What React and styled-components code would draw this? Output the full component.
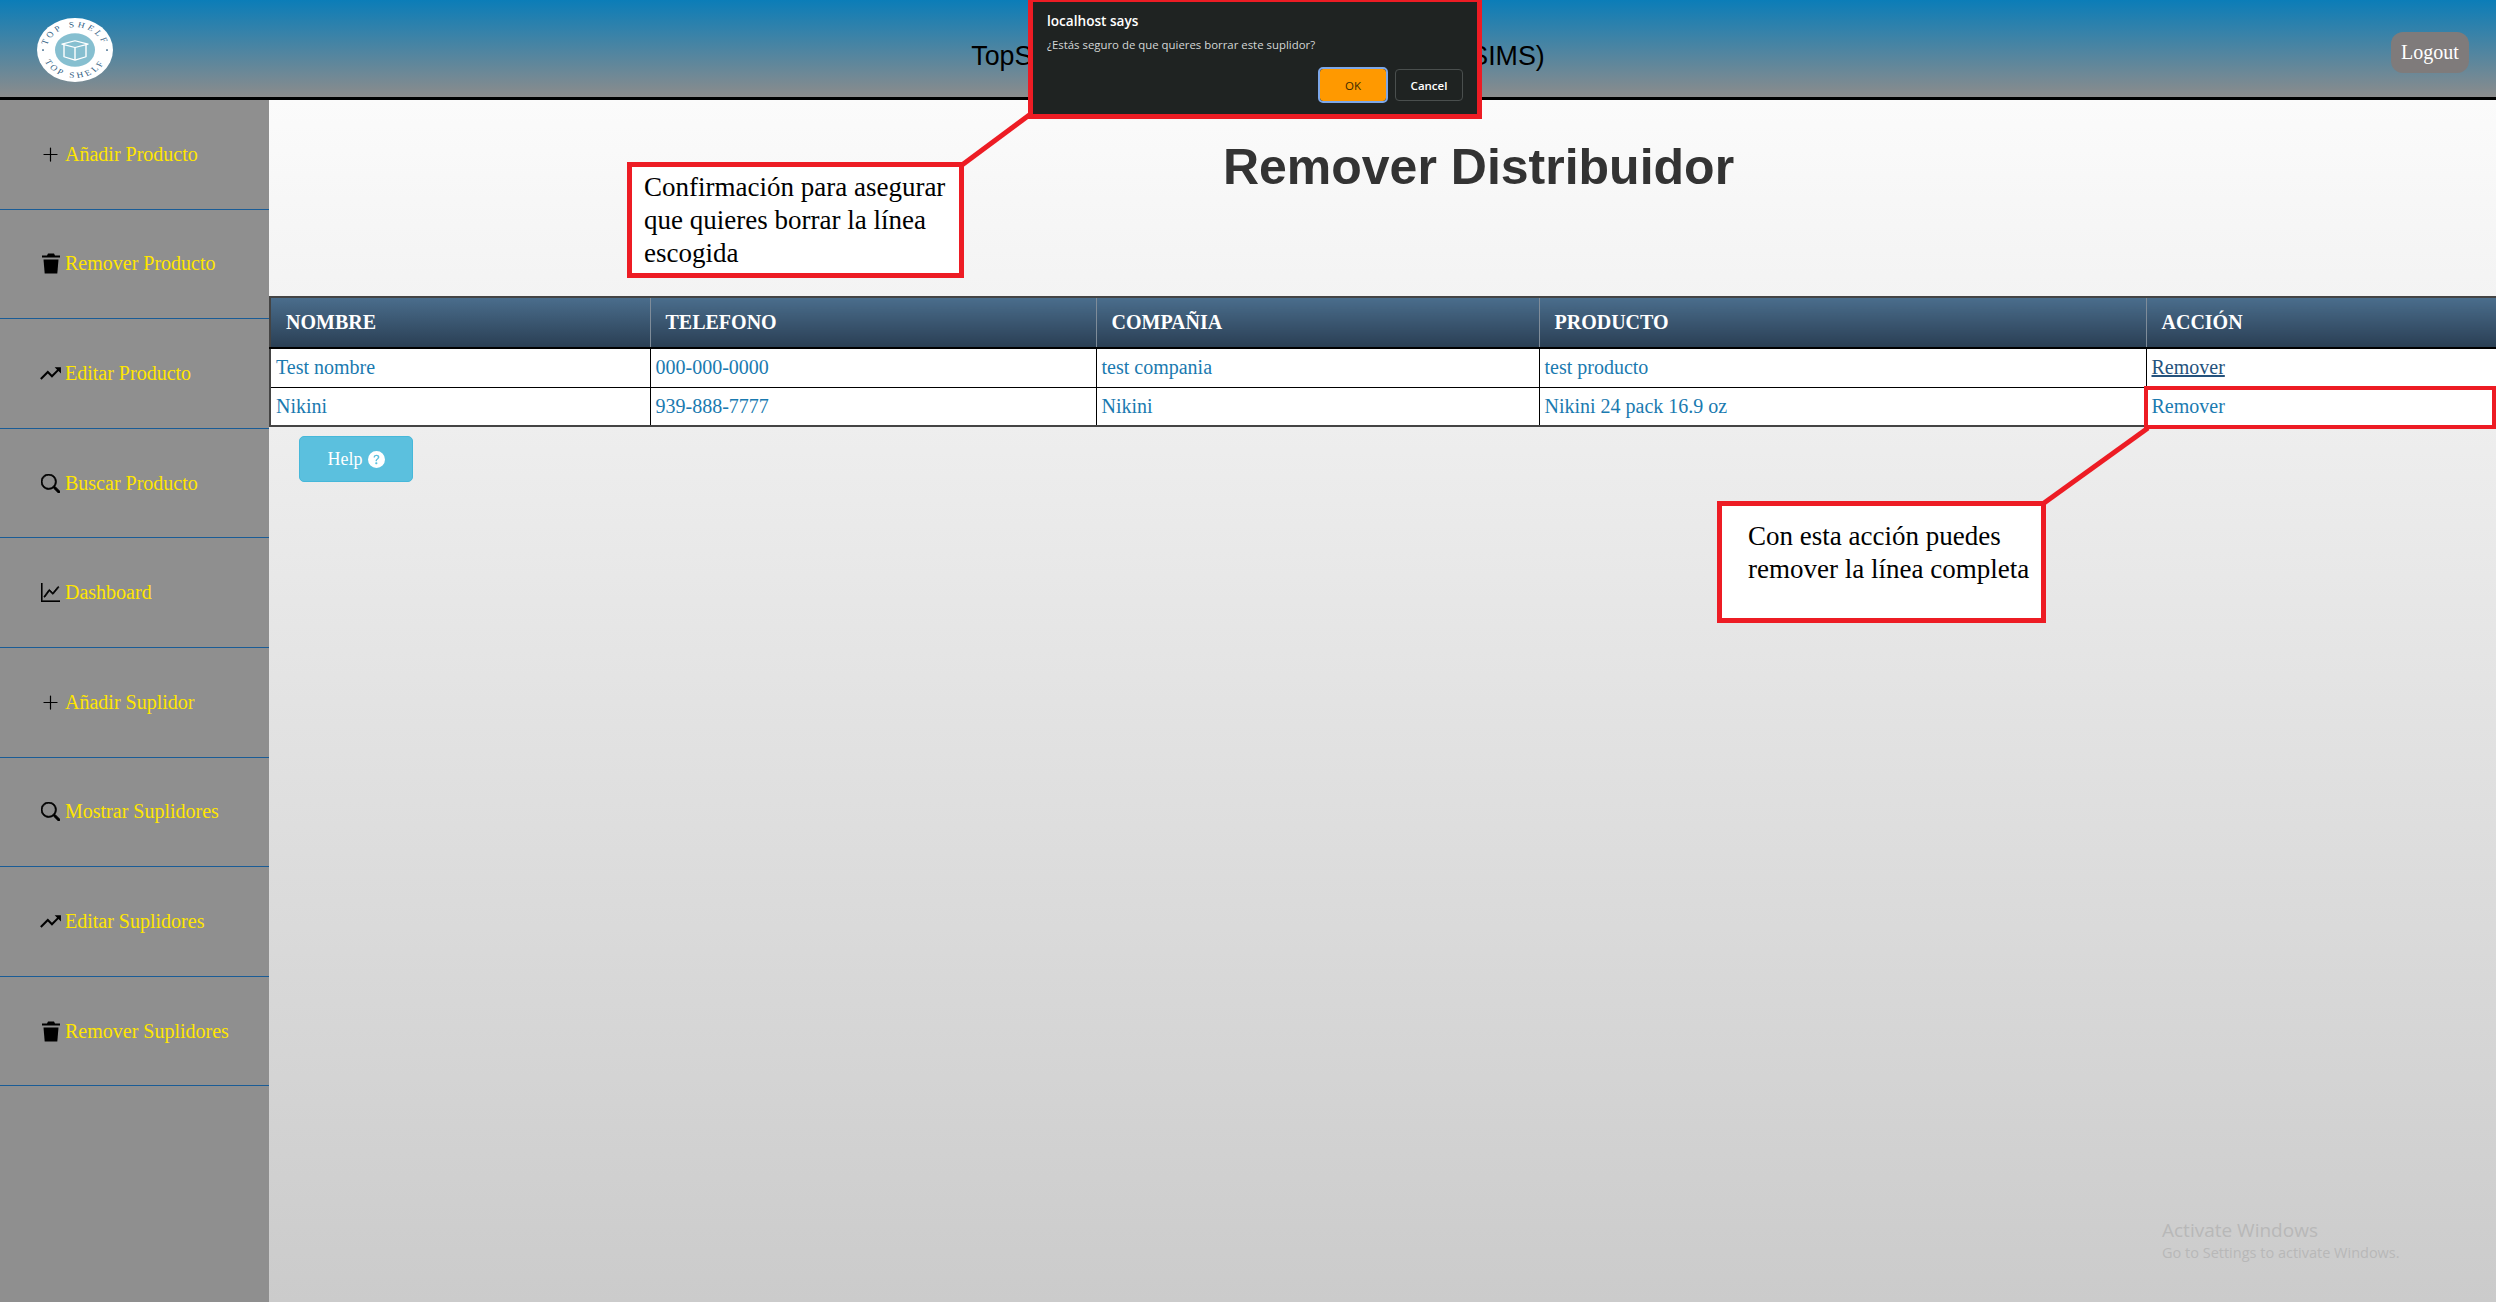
import React from 'react'
import styled, { createGlobalStyle } from 'styled-components'
import { BsPlusLg, BsSearch, BsGraphUp, BsQuestionCircleFill } from 'react-icons/bs'
import { MdTrendingUp } from 'react-icons/md'

const GlobalStyle = createGlobalStyle`
  html, body { margin: 0; padding: 0; height: 100%; }
  body { font-family: "Liberation Serif", "Times New Roman", serif; overflow: hidden; }
  #root { height: 100%; }
`

function TrashIcon() {
  return (
    <svg width="20" height="21" viewBox="0 0 20 21" fill="currentColor">
      <path d="M7 0.5 H13 L14 2.5 H19 V4.5 H1 V2.5 H6 Z" />
      <path d="M2.5 6.5 H17.5 L16.3 20.5 H3.7 Z" />
    </svg>
  )
}

const menuItems = [
  { label: 'Añadir Producto', icon: <BsPlusLg size={19} /> },
  { label: 'Remover Producto', icon: <TrashIcon /> },
  { label: 'Editar Producto', icon: <MdTrendingUp size={25} /> },
  { label: 'Buscar Producto', icon: <BsSearch size={19} stroke="currentColor" strokeWidth={0.6} /> },
  { label: 'Dashboard', icon: <BsGraphUp size={19} stroke="currentColor" strokeWidth={0.6} /> },
  { label: 'Añadir Suplidor', icon: <BsPlusLg size={19} /> },
  { label: 'Mostrar Suplidores', icon: <BsSearch size={19} stroke="currentColor" strokeWidth={0.6} /> },
  { label: 'Editar Suplidores', icon: <MdTrendingUp size={25} /> },
  { label: 'Remover Suplidores', icon: <TrashIcon /> },
]

const columns = [
  { title: 'Nombre', width: 380 },
  { title: 'Telefono', width: 446 },
  { title: 'Compañia', width: 443 },
  { title: 'Producto', width: 607 },
  { title: 'Acción', width: 351 },
]

const rows = [
  ['Test nombre', '000-000-0000', 'test compania', 'test producto'],
  ['Nikini', '939-888-7777', 'Nikini', 'Nikini 24 pack 16.9 oz'],
]

function Logo() {
  return (
    <LogoSvg viewBox="0 0 76 76" preserveAspectRatio="none">
      <defs>
        <path id="arcTop" d="M 9 40 A 29 29 0 0 1 67 40" />
        <path id="arcBottom" d="M 5 38 A 33 33 0 0 0 71 38" />
      </defs>
      <circle cx="38" cy="38" r="38" fill="#fff" />
      <circle cx="38" cy="38" r="20" fill="#86bfd0" />
      <text fontFamily="Liberation Serif, serif" fontSize="9.5" letterSpacing="3" fill="#2f5d82">
        <textPath href="#arcTop" startOffset="50%" textAnchor="middle">TOP SHELF</textPath>
      </text>
      <text fontFamily="Liberation Serif, serif" fontSize="9.5" letterSpacing="3" fill="#2f5d82">
        <textPath href="#arcBottom" startOffset="50%" textAnchor="middle">TOP SHELF</textPath>
      </text>
      <circle cx="6" cy="38" r="1" fill="#2f5d82" />
      <circle cx="70" cy="38" r="1" fill="#2f5d82" />
      <g fill="none" stroke="#fff" strokeWidth="1.4" strokeLinejoin="round">
        <path d="M25 31 L38 27 L51 31 L38 35 Z" />
        <path d="M27 32 V46 L38 50 L49 46 V32" />
        <path d="M38 35 V50" />
      </g>
    </LogoSvg>
  )
}

export default function App() {
  return (
    <>
      <GlobalStyle />
      <Page>
        <Header>
          <Logo />
          <HeaderTitle>TopShelf Inventory Management System (SIMS)</HeaderTitle>
          <LogoutButton>Logout</LogoutButton>
        </Header>

        <Body>
          <Sidebar>
            {menuItems.map((item) => (
              <MenuItem key={item.label}>
                <MenuIcon>{item.icon}</MenuIcon>
                <span>{item.label}</span>
              </MenuItem>
            ))}
          </Sidebar>

          <Main>
            <PageTitle>Remover Distribuidor</PageTitle>
            <Table>
              <thead>
                <tr>
                  {columns.map((col) => (
                    <Th key={col.title} $width={col.width}>{col.title}</Th>
                  ))}
                </tr>
              </thead>
              <tbody>
                {rows.map((row, i) => (
                  <tr key={row[0]}>
                    {row.map((cell) => <Td key={cell}>{cell}</Td>)}
                    <Td><RemoveLink $hover={i === 0}>Remover</RemoveLink></Td>
                  </tr>
                ))}
              </tbody>
            </Table>
            <HelpButton>
              Help <BsQuestionCircleFill size={17} />
            </HelpButton>
          </Main>
        </Body>

        <Connectors width="2496" height="1302">
          <line x1="962" y1="165" x2="1032" y2="113" />
          <line x1="2044" y1="503" x2="2148" y2="428" />
        </Connectors>
        <RowHighlight />
        <FirstCallout>Confirmación para asegurar que quieres borrar la línea escogida</FirstCallout>
        <SecondCallout>Con esta acción puedes remover la línea completa</SecondCallout>

        <Dialog>
          <DialogTitle>localhost says</DialogTitle>
          <DialogMessage>¿Estás seguro de que quieres borrar este suplidor?</DialogMessage>
          <DialogActions>
            <OkButton>OK</OkButton>
            <CancelButton>Cancel</CancelButton>
          </DialogActions>
        </Dialog>

        <Watermark>
          <strong>Activate Windows</strong>
          <span>Go to Settings to activate Windows.</span>
        </Watermark>
      </Page>
    </>
  )
}

const Page = styled.div`
  position: relative;
  height: 1302px;
  display: flex;
  flex-direction: column;
  overflow: hidden;
`

const Header = styled.header`
  height: 97px;
  flex: none;
  box-sizing: content-box;
  border-bottom: 3px solid #000;
  background: linear-gradient(to bottom, #0b7db8, #8c8c8c);
  display: flex;
  align-items: center;
  justify-content: space-between;
  padding: 0 27px 0 37px;
`

const LogoSvg = styled.svg`
  width: 76px;
  height: 64px;
  margin-top: 3px;
`

const HeaderTitle = styled.div`
  font-family: "Liberation Sans", Arial, sans-serif;
  font-size: 26.8px;
  color: #000;
  margin-top: 15px;
  margin-left: 12px;
`

const LogoutButton = styled.button`
  width: 78px;
  height: 41px;
  margin-top: 8px;
  padding: 0;
  border: none;
  border-radius: 12px;
  background: #7f7b7b;
  color: #fff;
  font-family: inherit;
  font-size: 20px;
`

const Body = styled.div`
  flex: 1;
  display: flex;
  min-height: 0;
`

const Sidebar = styled.nav`
  width: 269px;
  flex: none;
  background: #8f8f8f;
`

const MenuItem = styled.div`
  height: 109.6px;
  box-sizing: border-box;
  border-bottom: 1px solid #1a5c96;
  display: flex;
  align-items: center;
  padding-left: 36px;
  color: #ffe600;
  font-size: 20px;
`

const MenuIcon = styled.span`
  width: 29px;
  display: flex;
  align-items: center;
  justify-content: center;
  color: #000;
`

const Main = styled.main`
  flex: 1;
  min-width: 0;
  background: linear-gradient(to bottom, #fbfbfb, #cbcbcb);
`

const PageTitle = styled.h1`
  margin: 0;
  height: 196px;
  box-sizing: border-box;
  padding: 36px 0 0 192px;
  text-align: center;
  font-family: "Liberation Sans", Arial, sans-serif;
  font-size: 50px;
  line-height: 62px;
  font-weight: 700;
  color: #333;
`

const Table = styled.table`
  width: 2227px;
  table-layout: fixed;
  border-collapse: collapse;
  border-top: 2px solid #444;
  border-left: 2px solid #444;
  border-bottom: 2px solid #444;
  background: #fff;
`

const Th = styled.th`
  width: ${(p) => p.$width}px;
  height: 51px;
  padding: 0 0 1px 15px;
  box-sizing: border-box;
  text-align: left;
  text-transform: uppercase;
  font-size: 20px;
  font-weight: 700;
  color: #fff;
  background: linear-gradient(to bottom, #4a6d8c, #2a3f54);
  border-right: 1px solid #7f8c99;
  border-bottom: 2px solid #000;
`

const Td = styled.td`
  height: 39px;
  padding: 0 0 0 5px;
  box-sizing: border-box;
  font-size: 20px;
  color: #1a7ab0;
  border: 1px solid #000;
  border-top: none;
  border-left: none;
  tr:last-child & { border-bottom: none; }
`

const RemoveLink = styled.a`
  color: ${(p) => (p.$hover ? '#25527c' : '#1a7ab0')};
  text-decoration: ${(p) => (p.$hover ? 'underline' : 'none')};
`

const HelpButton = styled.button`
  display: flex;
  align-items: center;
  justify-content: center;
  gap: 5px;
  width: 114px;
  height: 46px;
  margin: 9px 0 0 30px;
  padding: 0;
  border: 1px solid #46b8da;
  border-radius: 5px;
  background: #5bc0de;
  color: #fff;
  font-family: inherit;
  font-size: 18px;
`

const Connectors = styled.svg`
  position: absolute;
  inset: 0;
  pointer-events: none;
  line {
    stroke: #ed1c24;
    stroke-width: 5;
  }
`

const RowHighlight = styled.div`
  position: absolute;
  left: 2144px;
  top: 386px;
  width: 352px;
  height: 43px;
  box-sizing: border-box;
  border: 4px solid #ed1c24;
`

const Callout = styled.div`
  position: absolute;
  box-sizing: border-box;
  background: #fff;
  border: 5px solid #ed1c24;
  color: #000;
  font-size: 27px;
  line-height: 33px;
`

const FirstCallout = styled(Callout)`
  left: 627px;
  top: 162px;
  width: 337px;
  height: 116px;
  padding: 4px 10px 0 12px;
`

const SecondCallout = styled(Callout)`
  left: 1717px;
  top: 501px;
  width: 329px;
  height: 122px;
  padding: 14px 6px 0 26px;
`

const Dialog = styled.div`
  position: absolute;
  left: 1028px;
  top: 0;
  width: 454px;
  height: 119px;
  box-sizing: border-box;
  border: 5px solid #ed1c24;
  border-top-width: 2px;
  background: #1f2322;
  font-family: "Open Sans", "Noto Sans", sans-serif;
  padding: 9px 14px 0 14px;
`

const DialogTitle = styled.div`
  font-size: 13.6px;
  line-height: 20px;
  font-weight: 600;
  color: #fff;
`

const DialogMessage = styled.div`
  margin-top: 6px;
  font-size: 11.4px;
  line-height: 16px;
  color: #d4d7d6;
`

const DialogActions = styled.div`
  display: flex;
  justify-content: flex-end;
  align-items: center;
  gap: 8px;
  margin-top: 15px;
`

const OkButton = styled.button`
  width: 68px;
  height: 34px;
  padding: 0;
  box-sizing: border-box;
  background: #ff9900;
  border: 1px solid #1f2322;
  outline: 2px solid #7da7e8;
  outline-offset: -1px;
  border-radius: 4px;
  color: #3a2a00;
  font-family: inherit;
  font-size: 11.5px;
  font-weight: 400;
`

const CancelButton = styled.button`
  width: 68px;
  height: 32px;
  padding: 0;
  box-sizing: border-box;
  background: transparent;
  border: 1px solid #4a4f4e;
  border-radius: 4px;
  color: #fff;
  font-family: inherit;
  font-size: 11.5px;
  font-weight: 600;
`

const Watermark = styled.div`
  position: absolute;
  left: 2162px;
  top: 1218px;
  display: flex;
  flex-direction: column;
  font-family: "Open Sans", "Noto Sans", sans-serif;
  color: #b8b8b8;
  strong {
    font-size: 19px;
    line-height: 25px;
    font-weight: 400;
  }
  span {
    font-size: 14.5px;
    line-height: 20px;
  }
`
